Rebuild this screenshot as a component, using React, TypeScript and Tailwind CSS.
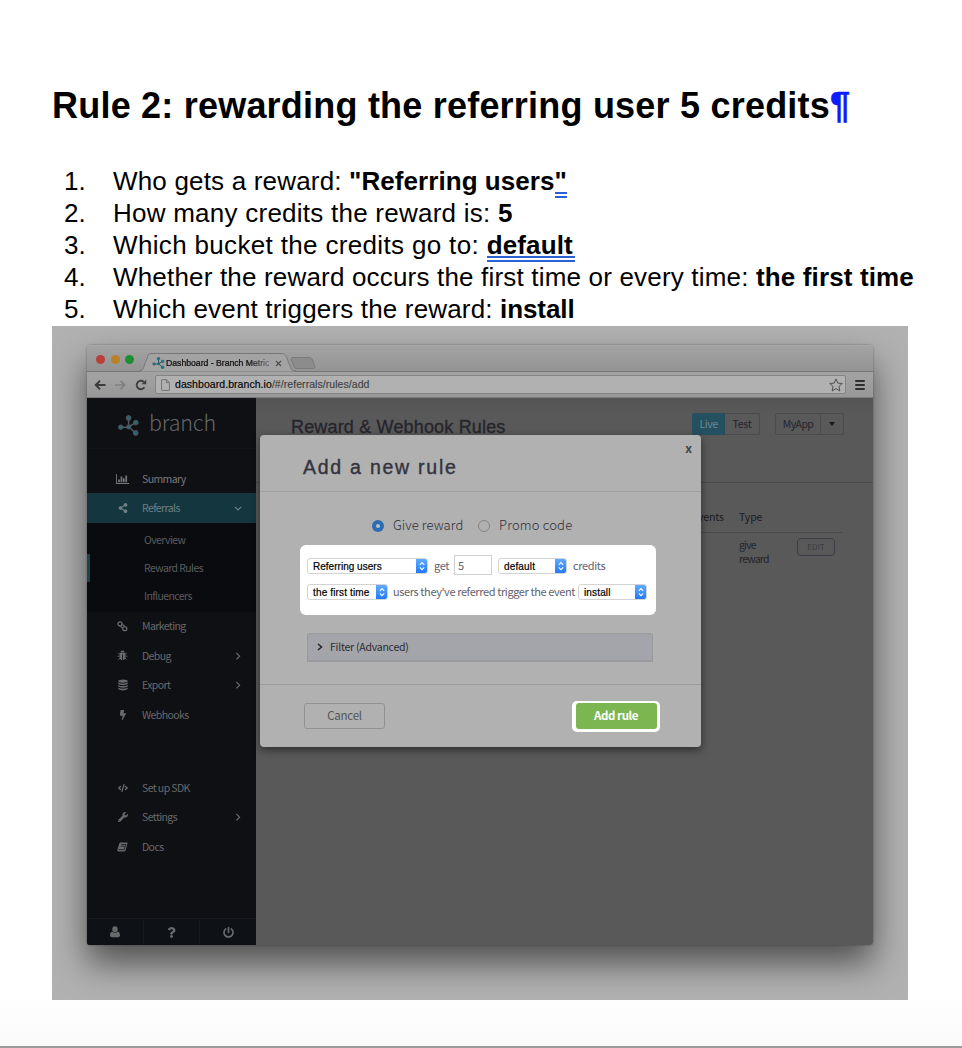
import type { ReactNode } from "react";
import { FaBolt, FaCode, FaPowerOff, FaQuestion, FaShareAlt, FaWrench } from "react-icons/fa";

const sans = "font-['Liberation_Sans',Arial,sans-serif]";
const source = "font-['Noto_Sans_CJK_SC','Source_Sans_Pro',sans-serif]";

function BranchMark({ className, dot = "#2b6472", line = "#54585c" }: { className: string; dot?: string; line?: string }) {
  return (
    <svg viewBox="0 0 21 21" className={className} fill="none">
      <g stroke={line} strokeWidth="1.5">
        <path d="M2.6 12.2H10L17.8 7.6M10.6 3.2V11.5L17.6 18.2" />
      </g>
      <g fill={dot} stroke={line} strokeWidth="0.9">
        <circle cx="2.7" cy="12.2" r="2.2" />
        <circle cx="10.6" cy="3" r="2.4" />
        <circle cx="17.8" cy="7.6" r="2.3" />
        <circle cx="17.7" cy="18" r="2.4" />
        <circle cx="10.6" cy="11.9" r="2" />
      </g>
    </svg>
  );
}

function ChartIcon() {
  return (
    <svg viewBox="0 0 13 10" className="h-[10px] w-[13px]" fill="currentColor">
      <path d="M0 0h.9v9.1H13V10H0zM2.2 5.4h1.7v2.9H2.2zM4.6 2.600h1.7v5.7H4.6zM7 4.200h1.7v4.1H7zM9.400 1.400h1.7v6.9H9.400z" />
    </svg>
  );
}

function RingsIcon() {
  return (
    <svg viewBox="0 0 11 11" className="h-[11px] w-[11px]" fill="none" stroke="currentColor" strokeWidth="1.3">
      <circle cx="3" cy="2.900" r="2" />
      <circle cx="7.800" cy="7.700" r="2" />
      <path d="M2.600 5L5.900 6.900M5 2.800L8.200 5.600" strokeWidth="1.100" />
    </svg>
  );
}

function BugIcon() {
  return (
    <svg viewBox="0 0 11 11" className="h-[11px] w-[11px]" fill="currentColor">
      <path d="M3.300 2.500A2.200 2.100 0 0 1 7.700 2.500Z" />
      <path d="M2.600 3.100H8.400V7.200C8.400 9.100 7.200 10 5.900 10.100V4.500H5.100V10.100C3.800 10 2.600 9.100 2.600 7.200Z" />
      <path d="M2.800 4.500L1.200 2.900M8.200 4.500L9.800 2.900M2.800 6.200H.5M8.200 6.200H10.500M3 8L1.300 9.700M8 8L9.700 9.700" fill="none" stroke="currentColor" strokeWidth=".9" />
    </svg>
  );
}

function DatabaseIcon() {
  return (
    <svg viewBox="0 0 10 12" className="h-[12px] w-[10px]" fill="currentColor">
      <ellipse cx="5" cy="2.100" rx="4.700" ry="1.700" />
      <path d="M.3 3.300C2 4.900 8 4.900 9.700 3.300V5C8 6.500 2 6.500 .3 5ZM.3 5.900C2 7.500 8 7.500 9.700 5.900V7.600C8 9.100 2 9.100 .3 7.600ZM.3 8.500C2 10.100 8 10.100 9.700 8.500V10.100C8 11.800 2 11.800 .3 10.100Z" />
    </svg>
  );
}

function BookIcon() {
  return (
    <svg viewBox="0 0 11 10" className="h-[10px] w-[11px]">
      <path d="M3.600 .5H9.800C10.500 .5 10.700 1 10.500 1.600L8.700 8C8.500 8.800 8 9.500 7.200 9.500H1.600C.6 9.500 .1 8.700 .4 7.800L2.300 1.600C2.500 .9 2.900 .5 3.600 .5Z" fill="currentColor" />
      <path d="M4.200 2.500H8.500M3.700 4.200H8M1.600 7.600H7.300L9 2" fill="none" stroke="#0f1014" strokeWidth=".7" />
    </svg>
  );
}

function UserIcon() {
  return (
    <svg viewBox="0 0 10 12" className="h-[12px] w-[10px]" fill="currentColor">
      <ellipse cx="5" cy="3.300" rx="2.700" ry="3" />
      <path d="M2.300 5.500C.8 5.900 0 7.400 0 9.300C0 10.600 .8 11.300 1.900 11.300H8.100C9.200 11.300 10 10.600 10 9.300C10 7.400 9.200 5.900 7.700 5.500C6.300 7.100 3.700 7.100 2.300 5.500Z" />
    </svg>
  );
}

function NavItem({ icon, label, chevron, className = "" }: { icon: ReactNode; label: string; chevron?: "right" | "down"; className?: string }) {
  return (
    <div className={`flex h-[29.4px] shrink-0 items-center ${className}`}>
      <span className="ml-[29px] flex w-[13px] justify-center text-[10px]">{icon}</span>
      <span className="ml-[13px] flex-1 text-[10.5px] leading-[14px] tracking-[-0.6px]">{label}</span>
      {chevron && (
        <svg viewBox="0 0 8 8" className="mr-[14px] h-[8px] w-[8px]" fill="none" stroke="currentColor" strokeWidth="1.2">
          {chevron === "right" ? <path d="M2.4 1L5.6 4.2L2.4 7.4" /> : <path d="M.8 2.8L4 6L7.2 2.8" />}
        </svg>
      )}
    </div>
  );
}

function Select({ label, className, tracking = "tracking-[0.15px]" }: { label: string; className: string; tracking?: string }) {
  return (
    <div className={`flex h-[16px] items-stretch overflow-hidden rounded-[3px] border border-[#d3d3d3] bg-white ${className}`}>
      <span className={`flex-1 pl-[5px] text-[10px] leading-[15px] whitespace-nowrap text-black [-webkit-text-stroke:0.2px] ${sans} ${tracking}`}>{label}</span>
      <span className="-my-px -mr-px flex w-[12px] items-center justify-center bg-linear-to-b from-[#64aefb] to-[#1c74fb]">
        <svg viewBox="0 0 8 10" className="h-[10px] w-[8px]" fill="none" stroke="white" strokeWidth="1.1">
          <path d="M1.8 3.8L4 1.6L6.2 3.8M1.8 6.4L4 8.6L6.2 6.4" />
        </svg>
      </span>
    </div>
  );
}

function Document() {
  const item = "flex h-[32px] items-center whitespace-pre";
  const num = "w-[49px] shrink-0";
  return (
    <div className={`text-black ${sans}`}>
      <h1 className="flex h-[40px] items-center pl-[52px] text-[36px] leading-[40px] font-bold tracking-[0.212px] whitespace-nowrap">
        Rule 2: rewarding the referring user 5 credits
        <span className="font-bold text-[#0b1cff] [-webkit-text-stroke:0.5px]">¶</span>
      </h1>
      <ol className="mt-[39px] pl-[64px] text-[26px] leading-[32px]">
        <li className={item}>
          <span className={num}>1.</span>
          <span className="tracking-[0.18px]">Who gets a reward: </span>
          <b className="tracking-[0.06px]">"Referring users</b>
          <b className="relative">
            "<span className="absolute top-[27px] left-0 h-[6px] w-[12px] border-y-2 border-[#2a62d4]" />
          </b>
        </li>
        <li className={item}>
          <span className={num}>2.</span>
          <span className="tracking-[0.245px]">How many credits the reward is: </span>
          <b>5</b>
        </li>
        <li className={item}>
          <span className={num}>3.</span>
          <span className="tracking-[0.34px]">Which bucket the credits go to: </span>
          <b className="relative tracking-[0.15px]">
            default
            <span className="absolute top-[27px] left-0 h-[6px] w-[88px] border-y-2 border-[#2a62d4]" />
          </b>
        </li>
        <li className={item}>
          <span className={num}>4.</span>
          <span className="tracking-[0.18px]">Whether the reward occurs the first time or every time: </span>
          <b className="tracking-[0.14px]">the first time</b>
        </li>
        <li className={item}>
          <span className={num}>5.</span>
          <span className="tracking-[0.17px]">Which event triggers the reward: </span>
          <b className="tracking-[-0.1px]">install</b>
        </li>
      </ol>
    </div>
  );
}

function BrowserChrome() {
  return (
    <div className={sans}>
      <div className="relative flex h-[26px] items-center rounded-t-[4px] border-t border-[#a9a9a9] bg-linear-to-b from-[#a3a3a3] to-[#949494]">
        <span className="mt-[2px] ml-[9px] h-[9px] w-[9px] rounded-full bg-[#b93f3b]" />
        <span className="mt-[2px] ml-[6px] h-[9px] w-[9px] rounded-full bg-[#b98227]" />
        <span className="mt-[2px] ml-[5px] h-[9px] w-[9px] rounded-full bg-[#1f8e30]" />
        <svg viewBox="0 0 180 20" className="absolute bottom-[-1px] left-[52px] h-[20px] w-[180px]">
          <path d="M0 19.5C4 19 4 17 5.5 13L8.500 5C9.500 2 10 1.500 13 1.500H142C145 1.500 146 2 147.500 5L151 14C152.500 18 153 19 157 19.500Z" fill="#a3a3a3" />
          <path d="M0 18.800C4 18.500 4 17 5.500 13L8.500 5C9.500 2 10 1.500 13 1.500H142C145 1.500 146 2 147.500 5L151 14C152.500 18 153 18.800 157 18.800" fill="none" stroke="#747474" strokeWidth=".9" />
          <path d="M153 5.500H170C172 5.500 173 6.500 173.500 8L175.500 14C176 16 175.500 16.500 174 16.500H158C156.500 16.500 155.500 16 155 14.500L152 7Z" fill="#8c8c8c" stroke="#777" strokeWidth=".9" />
        </svg>
        <span className="relative mt-[9px] ml-[18px] flex items-center">
          <BranchMark className="h-[12px] w-[13px]" dot="#197f98" line="#28505b" />
          <span className="ml-px w-[103px] overflow-hidden bg-linear-to-r from-[#111] from-80% to-[#8e8e8e] bg-clip-text text-[8.700px] leading-[12px] tracking-[-0.02px] whitespace-nowrap text-transparent [-webkit-text-stroke:0.2px_#1118]">
            Dashboard - Branch Metric
          </span>
          <svg viewBox="0 0 7 7" className="ml-[6px] h-[7px] w-[7px]" stroke="#4c4c4c" strokeWidth="1.1">
            <path d="M1 1L6 6M6 1L1 6" />
          </svg>
        </span>
      </div>
      <div className="flex h-[27px] items-center border-t border-b border-t-[#757575] border-b-[#7b7b7b] bg-linear-to-b from-[#a3a3a3] to-[#989898]">
        <svg viewBox="0 0 13 12" className="ml-[7px] h-[12px] w-[13px]" fill="none" stroke="#3c3c3c" strokeWidth="1.900">
          <path d="M1.500 6H11.500M6 1.800L1.700 6L6 10.200" />
        </svg>
        <svg viewBox="0 0 13 12" className="ml-[7px] h-[12px] w-[13px]" fill="none" stroke="#808080" strokeWidth="1.700">
          <path d="M1 6H11M6.500 1.800L10.800 6L6.500 10.200" />
        </svg>
        <svg viewBox="0 0 12 12" className="ml-[8px] h-[12px] w-[12px]" fill="none" stroke="#404040" strokeWidth="1.900">
          <path d="M9.400 8.300A4.200 4.200 0 1 1 8.800 3" />
          <path d="M11.200 .6V5.300H6.500Z" fill="#404040" stroke="none" />
        </svg>
        <div className="ml-[8px] flex h-[19px] w-[691px] items-center rounded-[2px] border border-[#838383] bg-[#b1b1b1]">
          <svg viewBox="0 0 9 12" className="ml-[5px] h-[12px] w-[9px]" fill="none" stroke="#747474" strokeWidth="1">
            <path d="M.6 .6H5.400L8.400 3.600V11.400H.6ZM5.400 .6V3.600H8.400" />
          </svg>
          <span className="-mt-px ml-[5px] text-[10.500px] leading-[14px] tracking-[0.06px] whitespace-nowrap text-[#414141] [-webkit-text-stroke:0.15px]">
            <span className="text-black">dashboard.branch.io</span>/#/referrals/rules/add
          </span>
          <svg viewBox="0 0 14 14" className="mr-[2px] ml-auto h-[14px] w-[14px]" fill="none" stroke="#4f4f4f" strokeWidth="1">
            <path d="M7 .9L8.800 5.100L13.300 5.500L9.900 8.500L10.900 13L7 10.600L3.100 13L4.100 8.500L.7 5.500L5.200 5.100Z" />
          </svg>
        </div>
        <div className="ml-[9px] flex w-[10px] flex-col gap-[2px]">
          <span className="h-[2px] rounded-full bg-[#2f2f2f]" />
          <span className="h-[2px] rounded-full bg-[#2f2f2f]" />
          <span className="h-[2px] rounded-full bg-[#2f2f2f]" />
        </div>
      </div>
    </div>
  );
}

function Sidebar() {
  const sub = "flex h-[28px] items-center pl-[57px] text-[10.5px] leading-[14px] tracking-[-0.6px]";
  return (
    <aside className={`flex w-[169px] shrink-0 flex-col bg-[#0f1014] text-[#68696b] ${source}`}>
      <div className="flex h-[51px] shrink-0 items-start border-b border-[#131518] bg-[#0e1013] pl-[31px]">
        <BranchMark className="mt-[17px] h-[21px] w-[21px]" />
        <span className="mt-[11px] ml-[10px] text-[21.500px] leading-[26px] font-light tracking-[-0.200px] text-[#66676a]">branch</span>
      </div>
      <div className="h-[15px] shrink-0" />
      <NavItem icon={<ChartIcon />} label="Summary" className="text-[#77787a]" />
      <NavItem icon={<FaShareAlt />} label="Referrals" chevron="down" className="bg-[#14363f] text-[#6c7f84]" />
      <div className="flex h-[89px] shrink-0 flex-col bg-[#0a0b0e] pt-[3px] text-[#5b5c5e]">
        <div className={sub}>Overview</div>
        <div className={`relative ${sub}`}>
          <span className="absolute inset-y-0 left-0 w-[3px] bg-[#174650]" />
          Reward Rules
        </div>
        <div className={sub}>Influencers</div>
      </div>
      <NavItem icon={<RingsIcon />} label="Marketing" />
      <NavItem icon={<BugIcon />} label="Debug" chevron="right" />
      <NavItem icon={<DatabaseIcon />} label="Export" chevron="right" />
      <NavItem icon={<FaBolt />} label="Webhooks" />
      <div className="h-[44px] shrink-0" />
      <NavItem icon={<FaCode />} label="Set up SDK" />
      <NavItem icon={<FaWrench />} label="Settings" chevron="right" />
      <NavItem icon={<BookIcon />} label="Docs" />
      <div className="mt-auto flex h-[27px] divide-x divide-[#16191d] border-t border-[#16191d] bg-[#0e1216] text-[11px]">
        <span className="flex flex-1 items-center justify-center"><UserIcon /></span>
        <span className="flex flex-1 items-center justify-center"><FaQuestion /></span>
        <span className="flex flex-1 items-center justify-center"><FaPowerOff /></span>
      </div>
    </aside>
  );
}

function Content() {
  const box = "flex items-center justify-center border border-[#4b4b4b] text-[10.5px] leading-[14px]";
  return (
    <main className={`flex min-w-0 flex-1 flex-col bg-[#595959] text-[#25252c] ${source}`}>
      <div className="flex h-[85px] shrink-0 border-b border-[#4a4a4a] bg-linear-to-b from-[#545454] to-[#595959] to-20%">
        <h2 className={`mt-[18px] ml-[35px] text-[18px] leading-[22px] tracking-[0.17px] whitespace-nowrap [-webkit-text-stroke:0.3px] ${sans}`}>Reward &amp; Webhook Rules</h2>
        <div className="mt-[15px] mr-[29px] ml-auto flex h-[22px]">
          <span className={`${box} w-[33px] rounded-l-[2px] border-[#26505f] bg-[#25505f] tracking-[-0.4px] text-[#6f8891]`}>Live</span>
          <span className={`${box} w-[35px] rounded-r-[2px] border-l-0 tracking-[-0.3px]`}>Test</span>
          <span className={`${box} ml-[15px] w-[46px] rounded-l-[2px] tracking-[-0.55px]`}>MyApp</span>
          <span className={`${box} w-[23px] rounded-r-[2px] border-l-0`}>
            <svg viewBox="0 0 6 4" className="h-[4px] w-[6px]"><path d="M0 0H6L3 4Z" fill="#17171a" /></svg>
          </span>
        </div>
      </div>
      <div className="mr-[30px] ml-auto flex w-[160px] flex-col">
        <div className="flex h-[50px] items-end border-b border-[#4b4b4b] pb-[8px] text-[10.500px] leading-[14px] tracking-[-0.100px] text-[#1b1b21]">
          <span className="w-[56px] pl-[9px]">Events</span>
          <span>Type</span>
        </div>
        <div className="flex text-[10.5px] leading-[14px]">
          <span className="mt-[5px] ml-[56px] w-[34px] tracking-[-0.8px]">give reward</span>
          <span className="mt-[5px] ml-auto mr-[8px] flex h-[18px] w-[38px] items-center justify-center rounded-[4px] border border-[#3c3c45] text-[8px] leading-[10px] text-[#3c3c42]">EDIT</span>
        </div>
      </div>
    </main>
  );
}

function Modal() {
  const words = "text-[11px] leading-[16px] whitespace-nowrap text-[#62626e]";
  return (
    <section className={`absolute top-[90px] left-[173px] flex h-[312px] w-[441px] flex-col rounded-[4px] bg-[#b1b1b1] shadow-[0_3px_8px_rgba(0,0,0,0.5)] ${source}`}>
      <header className="flex h-[57px] shrink-0 justify-between border-b border-[#9f9f9f]">
        <h3 className={`mt-[20px] ml-[43px] text-[19.500px] leading-[24px] tracking-[1.750px] text-[#34343f] [-webkit-text-stroke:0.4px] ${sans}`}>Add a new rule</h3>
        <span className="mt-[6px] mr-[9px] text-[12px] leading-[14px] font-bold text-[#444]">x</span>
      </header>
      <div className="flex flex-1 flex-col border-b border-[#9c9c9c]">
        <div className="mt-[24px] flex h-[20px] items-center pl-[112px] text-[13px] leading-[20px] font-light text-[#2f2f38]">
          <span className="flex h-[12px] w-[12px] items-center justify-center rounded-full bg-[#2c6cb3]">
            <span className="h-[4px] w-[4px] rounded-full bg-[#b9c2cc]" />
          </span>
          <span className="-mt-[2px] ml-[9px] w-[71px] whitespace-nowrap tracking-[0.1px]">Give reward</span>
          <span className="ml-[14px] h-[12px] w-[12px] rounded-full border border-[#848484]" />
          <span className="-mt-[2px] ml-[9px] whitespace-nowrap tracking-[0.2px]">Promo code</span>
        </div>
        <div className="mt-[9px] ml-[40px] h-[70px] w-[356px] shrink-0 rounded-[6px] bg-white">
          <div className="mt-[10px] flex h-[20px] items-center pl-[7px]">
            <Select label="Referring users" className="mt-[2px] w-[121px]" tracking="tracking-[0.02px]" />
            <span className={`ml-[6px] w-[20px] tracking-[-0.4px] ${words}`}>get</span>
            <span className="h-[20px] w-[38px] border border-[#d0d0d0] pl-[3px] text-[11px] leading-[18px] text-[#62626e]">5</span>
            <Select label="default" className="mt-[2px] ml-[6px] w-[69px]" />
            <span className={`ml-[6px] tracking-[-0.38px] ${words}`}>credits</span>
          </div>
          <div className="mt-[9px] flex h-[16px] items-center pl-[7px]">
            <Select label="the first time" className="w-[81px]" />
            <span className={`-mt-[2px] ml-[5px] w-[185px] tracking-[-0.4px] ${words}`}>users they've referred trigger the event</span>
            <Select label="install" className="w-[69px]" />
          </div>
        </div>
        <div className="mt-[18px] ml-[47px] flex h-[29px] w-[346px] shrink-0 items-center rounded-t-[3px] border border-b-2 border-[#9a9a9d] bg-[#a4a5aa] pl-[9px]">
          <svg viewBox="0 0 6 8" className="h-[8px] w-[6px]" fill="none" stroke="#26262c" strokeWidth="1.6">
            <path d="M1 1L4.500 4L1 7" />
          </svg>
          <span className="-mt-px ml-[7px] text-[10.500px] leading-[14px] tracking-[-0.240px] text-[#2c2c33]">Filter (Advanced)</span>
        </div>
      </div>
      <footer className="flex h-[62px] shrink-0 items-center justify-between pr-[41px] pl-[44px]">
        <span className="flex h-[26px] w-[81px] items-center justify-center rounded-[3px] border border-[#919191] text-[11.500px] leading-[16px] tracking-[-0.260px] text-[#55555b]">
          <span className="-mt-[2px]">Cancel</span>
        </span>
        <span className="flex h-[31px] w-[88px] items-center justify-center rounded-[5px] bg-white">
          <span className="flex h-[26px] w-[81px] items-center justify-center rounded-[3px] bg-[#7cb650] text-[11.500px] leading-[16px] font-bold tracking-[-0.450px] text-white">
            <span className="-mt-[2px]">Add rule</span>
          </span>
        </span>
      </footer>
    </section>
  );
}

export default function App() {
  return (
    <div className="flex h-[1048px] w-[962px] flex-col overflow-hidden border-b-2 border-[#9b9b9b] bg-linear-to-b from-white from-95% to-[#fafafa] pt-[86px]">
      <Document />
      <div className="mt-[1px] ml-[52px] h-[674px] w-[856px] shrink-0 overflow-hidden bg-[#b1b1b1] pt-[19px] pl-[35px]">
        <div className="relative flex h-[600px] w-[786px] flex-col rounded-t-[4px] rounded-b-[3px] shadow-[0_18px_34px_rgba(0,0,0,0.55),0_0_2px_rgba(0,0,0,0.4)]">
          <BrowserChrome />
          <div className="flex min-h-0 flex-1 overflow-hidden rounded-b-[3px]">
            <Sidebar />
            <Content />
          </div>
          <Modal />
        </div>
      </div>
    </div>
  );
}
